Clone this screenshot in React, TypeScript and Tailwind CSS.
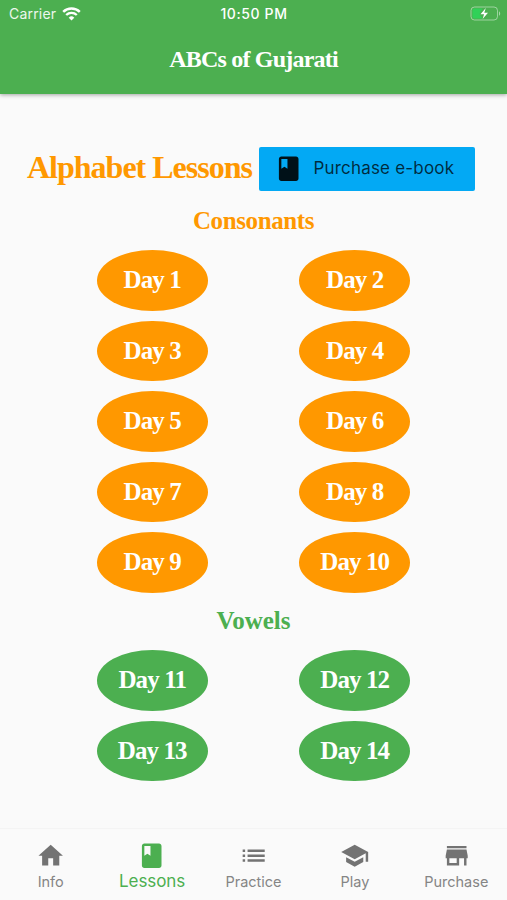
import { useState } from "react";
import { MdBook, MdHome, MdList, MdSchool, MdStore } from "react-icons/md";

const consonants = [1, 2, 3, 4, 5, 6, 7, 8, 9, 10];
const vowels = [11, 12, 13, 14];

const tabs = [
  { name: "Info", icon: MdHome },
  { name: "Lessons", icon: MdBook },
  { name: "Practice", icon: MdList },
  { name: "Play", icon: MdSchool },
  { name: "Purchase", icon: MdStore },
];

type DaysProps = {
  days: number[];
  color: string;
};

function StatusBar() {
  return (
    <div className="grid h-[27px] grid-cols-3 items-center pr-[6px] pl-[9px] text-[14px] leading-none">
      <div className="flex items-center gap-[6px]">
        <span className="tracking-[0.2px] text-white/90">Carrier</span>
        <svg width="19" height="14" viewBox="0 0 19 14" fill="none">
          <path d="M1.2 4.8a12 12 0 0 1 16.6 0" stroke="white" strokeWidth="2.5" />
          <path d="M4.2 8a7.7 7.7 0 0 1 10.6 0" stroke="white" strokeWidth="2.4" />
          <path d="M6.7 10.7a4 4 0 0 1 5.6 0L9.5 13.6z" fill="white" />
        </svg>
      </div>
      <span className="pr-[2px] text-center font-medium tracking-[0.6px] whitespace-nowrap">
        10:50 PM
      </span>
      <svg
        className="justify-self-end"
        width="31"
        height="15"
        viewBox="0 0 31 15"
        fill="none"
      >
        <rect x="1" y="1" width="26.5" height="13" rx="3.5" stroke="white" strokeOpacity="0.45" />
        <path d="M29 5.2c1.6.8 1.6 3.8 0 4.6z" fill="white" fillOpacity="0.5" />
        <path d="M4 2.5h8.5L9.5 8l3 4.5H4A1.5 1.5 0 0 1 2.5 11V4A1.5 1.5 0 0 1 4 2.5z" fill="#30d158" />
        <path d="M15.8 2l-5.3 6.2h3.6L12.6 13l5.4-6.3h-3.7z" fill="white" />
      </svg>
    </div>
  );
}

function Days({ days, color }: DaysProps) {
  return (
    <div className="grid grid-cols-[111px_111px] justify-center gap-x-[91.5px] gap-y-[10px]">
      {days.map((day) => (
        <button
          key={day}
          className={`flex h-[60.5px] items-center justify-center rounded-[50%] pb-[1px] font-['Liberation_Serif',serif] text-[25px] leading-none font-bold tracking-[-0.9px] text-white ${color}`}
        >
          Day {day}
        </button>
      ))}
    </div>
  );
}

export default function App() {
  const [current, setCurrent] = useState("Lessons");

  return (
    <div className="flex h-screen w-full flex-col overflow-hidden bg-[#fafafa] font-[Inter,sans-serif]">
      <header className="z-10 h-[94px] shrink-0 bg-[#4caf50] text-white shadow-[0_1px_4px_rgba(0,0,0,0.35)]">
        <StatusBar />
        <h1 className="pt-[17px] text-center font-['Liberation_Serif',serif] text-[24px] leading-[30px] font-bold tracking-[-0.8px]">
          ABCs of Gujarati
        </h1>
      </header>

      <main className="flex-1 pt-[52.5px]">
        <div className="flex h-[44px] items-center pl-[27px] whitespace-nowrap">
          <h2 className="w-[232px] shrink-0 pb-[3px] font-['Liberation_Serif',serif] text-[32px] leading-none font-bold tracking-[-1px] text-[#ff9800]">
            Alphabet Lessons
          </h2>
          <button className="flex h-[44px] w-[216px] items-center rounded-[2px] bg-[#03a9f4] pl-[15px] text-[17px] text-black/75">
            <MdBook size={29.4} className="text-black/90" />
            <span className="pl-[10px] tracking-[0.2px]">Purchase e-book</span>
          </button>
        </div>

        <h3 className="pt-[15.5px] pb-[15px] text-center font-['Liberation_Serif',serif] text-[25px] leading-[29px] font-bold tracking-[-0.4px] text-[#ff9800]">
          Consonants
        </h3>
        <Days days={consonants} color="bg-[#ff9800]" />

        <h3 className="pt-[13px] pb-[15.5px] text-center font-['Liberation_Serif',serif] text-[25px] leading-[29px] font-bold text-[#4caf50]">
          Vowels
        </h3>
        <Days days={vowels} color="bg-[#4caf50]" />
      </main>

      <nav className="grid h-[72px] shrink-0 grid-cols-5 border-t border-[#f4f4f4] pt-[12px]">
        {tabs.map((tab) => (
          <button
            key={tab.name}
            onClick={() => setCurrent(tab.name)}
            className={`flex flex-col items-center ${
              current === tab.name ? "text-[#4caf50]" : "text-[#737373]"
            }`}
          >
            <tab.icon size={29.4} />
            <span
              className={
                current === tab.name
                  ? "pt-[1px] text-[17px] leading-[20px] tracking-[-0.1px]"
                  : "pt-[2px] text-[14.5px] leading-[20px] text-[#858585]"
              }
            >
              {tab.name}
            </span>
          </button>
        ))}
      </nav>
    </div>
  );
}
